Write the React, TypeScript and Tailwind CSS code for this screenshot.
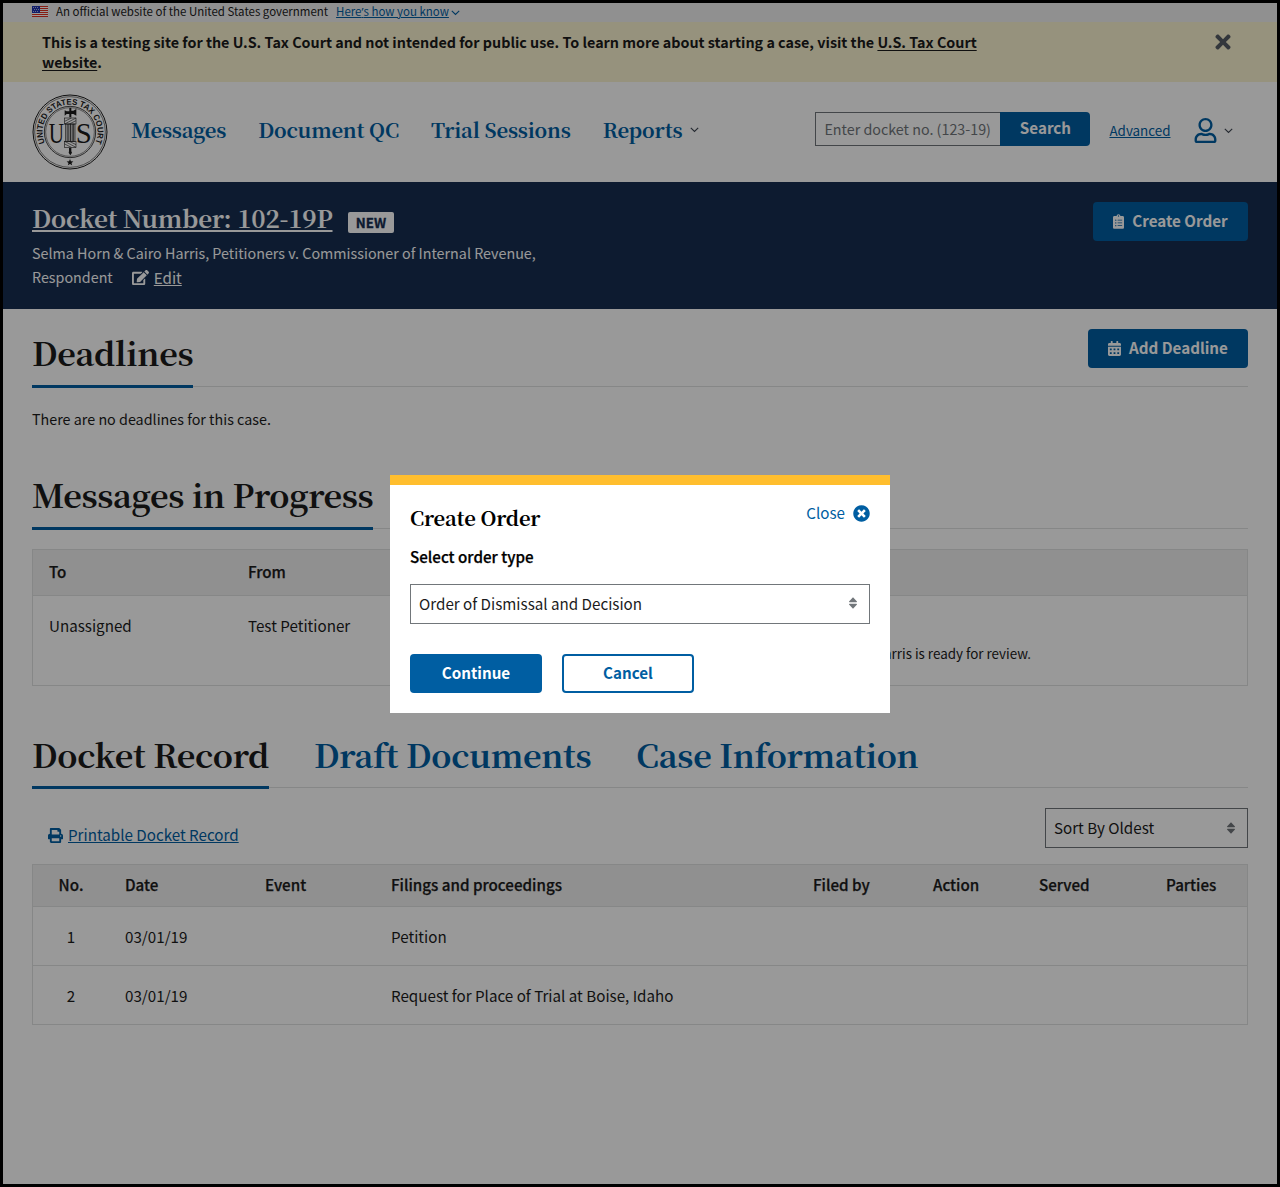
import type { ReactNode } from "react";
import {
  FaCalendarAlt,
  FaClipboardList,
  FaEdit,
  FaPrint,
  FaRegUser,
  FaTimes,
  FaTimesCircle,
} from "react-icons/fa";

function Flag() {
  const stripes = [0, 2, 4, 6, 8, 10];
  const stars = [1, 3, 5];
  return (
    <svg width="16" height="11" viewBox="0 0 16 11" className="shrink-0">
      <rect width="16" height="11" fill="#fff" />
      {stripes.map((y) => (
        <rect key={y} y={y} width="16" height="1" fill="#e0301e" />
      ))}
      <rect width="8" height="7" fill="#1e33b1" />
      {stars.map((y) =>
        [1, 3, 5].map((x) => <rect key={`${x}-${y}`} x={x + (y === 3 ? 1 : 0)} y={y} width="0.8" height="0.8" fill="#fff" />),
      )}
    </svg>
  );
}

function Chevron({ className }: { className: string }) {
  return (
    <svg width="9" height="6" viewBox="0 0 9 6" className={className} fill="none" stroke="currentColor" strokeWidth="1.1">
      <path d="M0.8 0.9 L4.5 4.5 L8.2 0.9" />
    </svg>
  );
}

function Seal() {
  return (
    <svg width="76" height="76" viewBox="0 0 228 228" className="shrink-0">
      <defs>
        <path id="seal-arc" d="M 38.6 147.8 A 82.5 82.5 0 1 1 189.4 147.8" />
      </defs>
      <g fill="none" stroke="#1b1b1b">
        <circle cx="114" cy="114" r="111" strokeWidth="3" />
        <circle cx="114" cy="114" r="106" strokeWidth="1.6" />
        <circle cx="114" cy="114" r="77" strokeWidth="2.4" />
        <circle cx="114" cy="114" r="73" strokeWidth="1.4" />
      </g>
      <text className="font-['Liberation_Sans'] text-[25px] font-bold" fill="#1b1b1b">
        <textPath href="#seal-arc" startOffset="1" textLength="326" lengthAdjust="spacingAndGlyphs">
          UNITED STATES TAX COURT
        </textPath>
      </text>
      <g fill="#1b1b1b" className="font-['Liberation_Serif']">
        <text x="73" y="146" textAnchor="middle" textLength="46" lengthAdjust="spacingAndGlyphs" className="text-[88px]">U</text>
        <text x="155" y="146" textAnchor="middle" textLength="48" lengthAdjust="spacingAndGlyphs" className="text-[88px]">S</text>
      </g>
      <rect x="97" y="68" width="35" height="94" fill="#fff" />
      <g fill="#1b1b1b">
        <path d="M112 42 h6 v8 h6 l9 -5 v20 l-9 -5 h-6 v10 h-6 v-10 h-8 l-6 5 v-16 l6 3 h8 z" />
        <path d="M111 162 h7 v10 l2 4 -5 8 -5 -8 1 -4 z" />
        <path d="M114 195 l2.8 6.8 7.4 0.4 -5.7 4.6 2 7.2 -6.5 -4.1 -6.5 4.1 2 -7.2 -5.7 -4.6 7.4 -0.4 z" />
      </g>
      <g fill="none" stroke="#1b1b1b" strokeWidth="1.8">
        <rect x="98" y="72" width="34" height="18" />
        <rect x="101" y="90" width="28" height="52" />
        <rect x="98" y="142" width="34" height="18" />
        <path d="M98 90 L132 72 M98 82 L118 72 M112 90 L132 80 M98 142 L132 160 M98 150 L118 160 M112 142 L132 152" />
        <path d="M105.5 90 v52 M110.5 90 v52 M115.5 90 v52 M120.5 90 v52 M125 90 v52" strokeWidth="2.4" />
      </g>
    </svg>
  );
}

function SelectBox({ children, className }: { children: ReactNode; className: string }) {
  return (
    <div className={`flex h-10 items-center justify-between border border-[#71767a] bg-white pr-[11px] pl-2 text-[#1b1b1b] ${className}`}>
      <span className="-mt-0.5">{children}</span>
      <svg width="10" height="12" viewBox="0 0 10 12" fill="#71767a" className="-mt-px">
        <path d="M5 0.2 L9 4.5 Q9 5.3 8.4 5.3 H1.6 Q1 5.3 1 4.5 Z M5 11.8 L9 7.5 Q9 6.7 8.4 6.7 H1.6 Q1 6.7 1 7.5 Z" />
      </svg>
    </div>
  );
}

function Button({ icon, children, className }: { icon?: ReactNode; children: ReactNode; className: string }) {
  return (
    <button className={`flex h-[39px] shrink-0 items-center justify-center gap-2 rounded bg-[#005ea2] font-bold text-white ${className}`}>
      {icon}
      <span className="-mt-[3px]">{children}</span>
    </button>
  );
}

function Tab({ children, active }: { children: ReactNode; active?: boolean }) {
  return (
    <h2
      className={
        active
          ? "h-[calc(100%+2px)] border-b-3 border-[#005ea2] font-['Noto_Serif_CJK_SC'] text-[32.45px] leading-[60px] font-bold tracking-[-0.01em] text-[#1b1b1b]"
          : "h-full font-['Noto_Serif_CJK_SC'] text-[32.4px] leading-[60px] font-bold tracking-[-0.01em] text-[#005ea2]"
      }
    >
      {children}
    </h2>
  );
}

const docketColumns =
  "grid grid-cols-[92px_140px_126px_422px_120px_106px_127px_1fr] items-center";

const entries = [
  { no: "1", date: "03/01/19", filing: "Petition" },
  { no: "2", date: "03/01/19", filing: "Request for Place of Trial at Boise, Idaho" },
];

export default function App() {
  return (
    <div className="relative h-[1187px] w-[1280px] overflow-hidden border-3 border-black bg-white font-['Noto_Sans_CJK_SC',sans-serif] text-[15.18px] leading-6 text-[#1b1b1b]">
      <div className="flex h-[19px] items-center bg-[#f0f0f0] pb-[3px] pl-[29px] text-[11.47px] leading-4">
        <Flag />
        <span className="ml-2">An official website of the United States government</span>
        <a className="ml-2 text-[#005ea2] underline underline-offset-1">
          Here<span className="font-['Noto_Sans']">’</span>s how you know
        </a>
        <Chevron className="mt-[3px] ml-0.5 text-[#005ea2]" />
      </div>

      <div className="flex h-[60px] justify-between bg-[#faf3d1] pt-2.5 pr-[43px] pl-[39px]">
        <p className="text-[14.33px] leading-5 font-bold">
          This is a testing site for the U.S. Tax Court and not intended for public use. To learn more about starting a
          case, visit the <a className="underline underline-offset-2">U.S. Tax Court</a>
          <br />
          <a className="underline underline-offset-2">website</a>.
        </p>
        <FaTimes className="-mt-px size-[22px] text-[#565c65]" />
      </div>

      <header className="flex h-[100px] items-center pr-[44px] pl-[28.5px]">
        <Seal />
        <nav className="mb-1 ml-[23.5px] flex gap-8 font-['Noto_Serif_CJK_SC'] text-[20.3px] leading-8 font-bold tracking-[-0.01em] text-[#005ea2]">
          <a>Messages</a>
          <a>Document QC</a>
          <a>Trial Sessions</a>
          <a className="flex items-center gap-2">
            Reports <Chevron className="text-[#3d4551]" />
          </a>
        </nav>
        <div className="mb-1.5 ml-auto flex h-[34px] items-center">
          <div className="h-[34px] w-[185px] border border-r-0 border-[#71767a] pl-2 text-[14.3px] leading-[31px] text-[#71767a]">
            Enter docket no. (123-19)
          </div>
          <button className="h-[34px] w-[90px] rounded-r bg-[#005ea2] pb-1 font-bold text-white">Search</button>
          <a className="mt-px ml-[19px] text-[13.4px] text-[#005ea2] underline underline-offset-1">Advanced</a>
          <FaRegUser className="mt-[3px] ml-[22.5px] size-[25px] text-[#005ea2]" />
          <Chevron className="mt-1 ml-1.5 text-[#3d4551]" />
        </div>
      </header>

      <div className="flex h-[127px] justify-between bg-[#162e51] pt-5 pr-[29px] pl-[29px] text-white">
        <div>
          <div className="flex h-9 items-center">
            <h1 className="-mt-1 w-[301px] font-['Noto_Serif_CJK_SC'] text-[24.3px] font-bold tracking-[-0.01em] whitespace-nowrap underline decoration-2 underline-offset-2">
              Docket Number: 102-19P
            </h1>
            <span className="mt-1 ml-[15px] h-[21px] w-[46px] rounded-xs bg-white text-center text-[13.3px] leading-[21px] font-bold text-[#162e51] [-webkit-text-stroke:0.3px]">
              NEW
            </span>
          </div>
          <p className="mt-[3px] text-[14.32px] leading-6">
            Selma Horn &amp; Cairo Harris, Petitioners v. Commissioner of Internal Revenue,
          </p>
          <div className="flex items-center text-[14.32px]">
            <span>Respondent</span>
            <FaEdit className="ml-[19px] size-[17px]" />
            <a className="-mt-px ml-[5px] text-[15.15px] underline underline-offset-1">Edit</a>
          </div>
        </div>
        <Button className="w-[155px]" icon={<FaClipboardList className="h-[15px] w-[11px]" />}>
          Create Order
        </Button>
      </div>

      <main className="px-[29px]">
        <div className="flex h-[78px] items-end justify-between border-b border-[#dfe1e2]">
          <div className="h-16">
            <Tab active>Deadlines</Tab>
          </div>
          <Button className="mb-[18px] w-[160px]" icon={<FaCalendarAlt className="h-[15px] w-[13px]" />}>
            Add Deadline
          </Button>
        </div>
        <p className="mt-5 text-[14.33px]">There are no deadlines for this case.</p>

        <div className="mt-[33px] flex h-[65px] border-b border-[#dfe1e2]">
          <Tab active>Messages in Progress</Tab>
        </div>
        <div className="mt-5 border border-[#dfe1e2]">
          <div className="grid h-[46px] grid-cols-[199px_1fr] items-center border-b border-[#dfe1e2] bg-[#f0f0f0] pb-[3px] pl-4 font-medium [-webkit-text-stroke:0.25px]">
            <span>To</span>
            <span>From</span>
          </div>
          <div className="grid h-[89px] grid-cols-[199px_320px_463px] pt-[17px] pl-4">
            <span>Unassigned</span>
            <span>Test Petitioner</span>
            <span className="pt-7 text-right text-[13.4px]">
              Petition filed by Selma Horn &amp; Cairo Harris is ready for review.
            </span>
          </div>
        </div>

        <div className="mt-[38px] flex h-16 gap-[45px] border-b border-[#dfe1e2]">
          <Tab active>Docket Record</Tab>
          <Tab>Draft Documents</Tab>
          <Tab>Case Information</Tab>
        </div>
        <div className="mt-5 flex items-start justify-between">
          <a className="mt-[14px] ml-4 flex items-center gap-[5px] text-[#005ea2]">
            <FaPrint className="mt-[3px] size-[15px]" />
            <span className="underline underline-offset-1">Printable Docket Record</span>
          </a>
          <SelectBox className="w-[203px]">Sort By Oldest</SelectBox>
        </div>

        <div className="mt-4 border border-[#dfe1e2]">
          <div className={`${docketColumns} h-[41px] bg-[#f0f0f0] pb-[3px] font-medium [-webkit-text-stroke:0.25px]`}>
            <span className="w-[76px] text-center">No.</span>
            <span>Date</span>
            <span>Event</span>
            <span>Filings and proceedings</span>
            <span>Filed by</span>
            <span>Action</span>
            <span>Served</span>
            <span>Parties</span>
          </div>
          {entries.map((e) => (
            <div key={e.no} className={`${docketColumns} h-[59px] border-t border-[#dfe1e2]`}>
              <span className="w-[76px] text-center">{e.no}</span>
              <span>{e.date}</span>
              <span />
              <span>{e.filing}</span>
            </div>
          ))}
        </div>
      </main>

      <div className="absolute inset-0 flex items-center justify-center bg-black/40">
        <section className="h-[238px] w-[500px] border-t-10 border-[#ffbe2e] bg-white px-5 pt-4">
          <div className="flex items-start justify-between">
            <h3 className="mt-px font-['Noto_Serif_CJK_SC'] text-[20.25px] leading-8 font-bold tracking-[-0.01em] text-black">
              Create Order
            </h3>
            <a className="-mt-px flex items-center gap-2 text-[#005ea2]">
              Close <FaTimesCircle className="mt-[3px] size-[17px]" />
            </a>
          </div>
          <label className="mt-2.5 block font-medium text-black [-webkit-text-stroke:0.25px]">Select order type</label>
          <SelectBox className="mt-4">Order of Dismissal and Decision</SelectBox>
          <div className="mt-[30px] flex gap-5">
            <Button className="w-[132px]">Continue</Button>
            <button className="h-[39px] w-[132px] rounded border-2 border-[#005ea2] pb-[3px] font-bold text-[#005ea2]">
              Cancel
            </button>
          </div>
        </section>
      </div>
    </div>
  );
}
